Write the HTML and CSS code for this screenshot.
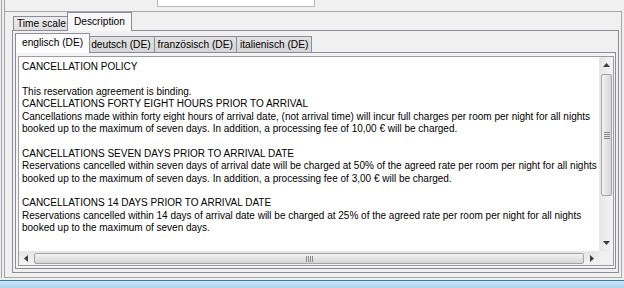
FILE: index.html
```html
<!DOCTYPE html>
<html>
<head>
<meta charset="utf-8">
<link rel="stylesheet" href="styles.css">
</head>
<body>
<div class="window">
  <div class="frame">
    <div class="top">
      <span class="lbl">Valid as of:</span>
      <span class="inp"></span>
    </div>
    <div class="box">
      <div class="tabctl outer">
        <div class="strip">
          <div class="tab">Time scale</div>
          <div class="tab sel">Description</div>
        </div>
        <div class="panel">
          <div class="tabctl inner">
            <div class="strip">
              <div class="tab sel">englisch (DE)</div>
              <div class="tab">deutsch (DE)</div>
              <div class="tab">französisch (DE)</div>
              <div class="tab">italienisch (DE)</div>
            </div>
            <div class="panel">
              <div class="textbox">
                <div class="content">
                  <div class="ln">CANCELLATION POLICY</div>
                  <div class="ln"></div>
                  <div class="ln">This reservation agreement is binding.</div>
                  <div class="ln">CANCELLATIONS FORTY EIGHT HOURS PRIOR TO ARRIVAL</div>
                  <div class="ln">Cancellations made within forty eight hours of arrival date, (not arrival time) will incur full charges per room per night for all nights</div>
                  <div class="ln">booked up to the maximum of seven days. In addition, a processing fee of 10,00 € will be charged.</div>
                  <div class="ln"></div>
                  <div class="ln">CANCELLATIONS SEVEN DAYS PRIOR TO ARRIVAL DATE</div>
                  <div class="ln">Reservations cancelled within seven days of arrival date will be charged at 50% of the agreed rate per room per night for all nights</div>
                  <div class="ln">booked up to the maximum of seven days. In addition, a processing fee of 3,00 € will be charged.</div>
                  <div class="ln"></div>
                  <div class="ln">CANCELLATIONS 14 DAYS PRIOR TO ARRIVAL DATE</div>
                  <div class="ln">Reservations cancelled within 14 days of arrival date will be charged at 25% of the agreed rate per room per night for all nights</div>
                  <div class="ln">booked up to the maximum of seven days.</div>
                </div>
                <div class="vscroll">
                  <div class="btn"><svg width="7" height="4" viewBox="0 0 7 4"><polygon points="0,4 3.5,0 7,4" fill="#3c3c3c"/></svg></div>
                  <div class="track">
                    <div class="thumb">
                      <svg width="6" height="7" viewBox="0 0 6 7"><path d="M0 0.5H6M0 2.5H6M0 4.5H6M0 6.5H6" stroke="#8a8a8a" stroke-width="1"/></svg>
                    </div>
                  </div>
                  <div class="btn"><svg width="7" height="4" viewBox="0 0 7 4"><polygon points="0,0 3.5,4 7,0" fill="#3c3c3c"/></svg></div>
                </div>
                <div class="hscroll">
                  <div class="btn"><svg width="4" height="7" viewBox="0 0 4 7"><polygon points="4,0 0,3.5 4,7" fill="#3c3c3c"/></svg></div>
                  <div class="track">
                    <div class="thumb">
                      <svg width="7" height="6" viewBox="0 0 7 6"><path d="M0.5 0V6M2.5 0V6M4.5 0V6M6.5 0V6" stroke="#8a8a8a" stroke-width="1"/></svg>
                    </div>
                  </div>
                  <div class="btn"><svg width="4" height="7" viewBox="0 0 4 7"><polygon points="0,0 4,3.5 0,7" fill="#3c3c3c"/></svg></div>
                </div>
                <div class="corner"></div>
              </div>
            </div>
          </div>
        </div>
      </div>
    </div>
  </div>
</div>
<div class="gap"></div>
<div class="taskbar"></div>
</body>
</html>
```
FILE: styles.css
```css
* { box-sizing: border-box; }
html, body { margin: 0; padding: 0; }
body {
  width: 624px;
  height: 288px;
  overflow: hidden;
  background: #f0f0f0;
  font-family: "Liberation Sans", Arial, sans-serif;
  font-size: 10px;
  color: #000;
}
.window {
  height: 278px;
  margin-left: 1px;
  border-left: 1px solid #a3a3a3;
  padding-left: 2px;
}
.frame {
  height: 100%;
  width: 618px;
  border-left: 1px solid #a3a3a3;
  display: flex;
  flex-direction: column;
}
.top {
  height: 11px;
  display: flex;
  overflow: hidden;
  align-items: flex-start;
}
.lbl {
  margin: -9px 0 0 6px;
  line-height: 12px;
  width: 146px;
}
.inp {
  display: block;
  width: 158px;
  height: 14px;
  margin-top: -7px;
  background: #fff;
  border: 1px solid #b9b9b9;
  border-top: none;
}
.box {
  flex: 1;
  border-top: 1px solid #a8a8a8;
  border-right: 1px solid #a8a8a8;
  border-bottom: 1px solid #a8a8a8;
  display: flex;
  flex-direction: column;
}
.tabctl { display: flex; flex-direction: column; }
.tabctl.outer {
  flex: 1;
  margin: 0 2px 4px 7px;
}
.strip {
  display: flex;
  align-items: flex-end;
  position: relative;
  z-index: 1;
  font-size: 10.2px;
}
.outer > .strip { height: 18px; padding-left: 1px; }
.tab {
  border: 1px solid #8c8e94;
  border-bottom: none;
  white-space: nowrap;
  background: linear-gradient(#ececec, #dedede);
  color: #000;
}
.tab + .tab { margin-left: -1px; }
.outer > .strip > .tab {
  height: 14px;
  padding: 1px 3px 0 3px;
  line-height: 11px;
}
.outer > .strip > .tab.sel {
  height: 19px;
  margin: 0 -2px -1px -3px;
  padding: 3px 6px 0 6px;
  background: #f8f8f8;
  position: relative;
}
.panel {
  flex: 1;
  border: 1px solid #8c8e94;
  background: #f0f0f0;
  display: flex;
  flex-direction: column;
}
.outer > .panel { padding: 2px 2px 3px 2px; }
.tabctl.inner { flex: 1; }
.inner > .strip { height: 19px; padding-left: 2px; }
.inner > .strip > .tab {
  height: 16px;
  padding: 2px 3px 0 3px;
  line-height: 12px;
  background: linear-gradient(#e2e2e2, #d6d6d6);
}
.inner > .strip > .tab.sel {
  height: 20px;
  margin: 0 -2px -1px -2px;
  padding: 3px 6px 0 6px;
  background: #fcfcfc;
  position: relative;
  z-index: 2;
}
.inner > .panel {
  padding: 3px 1px 2px 2px;
  background: #f4f4f4;
}
.textbox {
  flex: 1;
  border: 1px solid #9a9ca2;
  background: #fff;
  display: grid;
  grid-template-columns: 1fr 14px;
  grid-template-rows: 1fr 14px;
  overflow: hidden;
}
.content {
  padding: 4px 0 0 3px;
  line-height: 12.4px;
  overflow: hidden;
}
.ln { white-space: nowrap; height: 12.4px; }
.vscroll {
  display: flex;
  flex-direction: column;
  background: linear-gradient(90deg, #e6e6e6, #f4f4f4);
  border-left: 1px solid #e8e8e8;
}
.hscroll {
  display: flex;
  background: linear-gradient(#e6e6e6, #f4f4f4);
  border-top: 1px solid #e8e8e8;
}
.btn {
  display: flex;
  align-items: center;
  justify-content: center;
  flex: none;
}
.vscroll .btn { height: 16px; }
.hscroll .btn { width: 14px; }
.track { flex: 1; display: flex; }
.vscroll .track { flex-direction: column; padding: 1px 1px 0 1px; }
.hscroll .track { padding: 1px 0 1px 1px; }
.thumb {
  border: 1px solid #a4a4a4;
  border-radius: 2px;
  display: flex;
  align-items: center;
  justify-content: center;
}
.vscroll .thumb {
  height: 122px;
  background: linear-gradient(90deg, #f3f3f3, #e2e2e2 55%, #d6d6d6);
}
.hscroll .thumb {
  width: 550px;
  background: linear-gradient(#f3f3f3, #e2e2e2 55%, #d6d6d6);
}
.corner { background: #f0f0f0; }
.gap { height: 2px; }
.taskbar {
  height: 8px;
  border-top: 1px solid #3a7aa6;
  background: linear-gradient(#cfe8f8, #a9d3ef);
}
```
